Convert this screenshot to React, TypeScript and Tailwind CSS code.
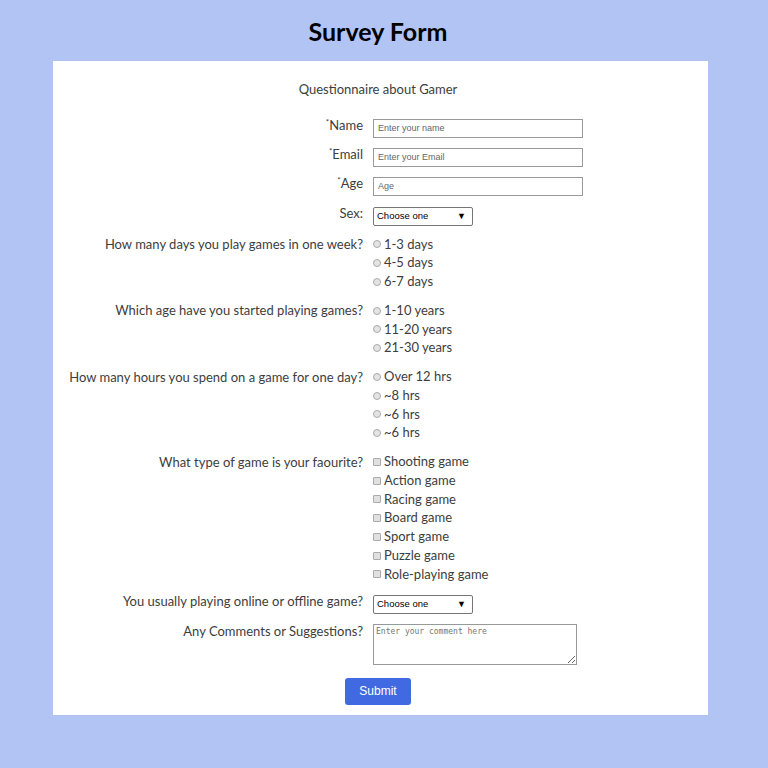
import React from "react";

const font = { fontFamily: "Lato, 'Open Sans', sans-serif" };

function Label({ children }: { children: React.ReactNode }) {
  return (
    <div className="text-right text-[13px] leading-[18px] text-[#3d3d3d]" style={font}>
      {children}
    </div>
  );
}

function Req({ t }: { t: string }) {
  return (
    <>
      <span className="text-[8px] align-top leading-[12px]">*</span>
      {t}
    </>
  );
}

function Radio({ label }: { label: string }) {
  return (
    <div className="flex items-center h-[18.75px] text-[13px] text-[#3d3d3d]" style={font}>
      <span className="w-[8px] h-[8px] rounded-full border border-[#aaa] bg-[#e4e4e4] mr-[3px] shrink-0" />
      <span>{label}</span>
    </div>
  );
}

function Check({ label }: { label: string }) {
  return (
    <div className="flex items-center h-[18.75px] text-[13px] text-[#3d3d3d]" style={font}>
      <span className="w-[8px] h-[8px] rounded-[1px] border border-[#aaa] bg-[#e0e0e0] mr-[3px] shrink-0" />
      <span>{label}</span>
    </div>
  );
}

function TextBox({ ph }: { ph: string }) {
  return (
    <div
      className="w-[210px] h-[19px] border border-[#999] bg-white flex items-center px-[4px] text-[9px] text-[#666]"
      style={{ fontFamily: "'Liberation Sans', Arial, sans-serif" }}
    >
      {ph}
    </div>
  );
}

function Select() {
  return (
    <div
      className="w-[100px] h-[19px] border border-[#767676] rounded-[2px] bg-white flex items-center justify-between pl-[3px] pr-[6px] text-[9.5px] text-black"
      style={{ fontFamily: "'Liberation Sans', Arial, sans-serif" }}
    >
      <span>Choose one</span>
      <span className="text-[9px]">▼</span>
    </div>
  );
}

const rowCls = "grid grid-cols-[310px_1fr] gap-x-[10px]";

export default function App() {
  return (
    <div className="min-h-screen bg-[#b1c4f4] pb-[53px]">
      <div className="w-[756px]">
        <h1
          className="text-center text-[25px] leading-[30px] font-bold text-black pt-[16px] pb-[15px]"
          style={font}
        >
          Survey Form
        </h1>
        <div className="ml-[53px] w-[655px] bg-white pt-[18px] pb-[10px] pr-[5px]">
          <p className="text-center text-[13px] leading-[20px] text-[#3d3d3d]" style={font}>
            Questionnaire about Gamer
          </p>

          <div className={rowCls + " mt-[17px]"}>
            <Label><Req t="Name" /></Label>
            <div className="mt-[3px]"><TextBox ph="Enter your name" /></div>
          </div>
          <div className={rowCls + " mt-[7px]"}>
            <Label><Req t="Email" /></Label>
            <div className="mt-[3px]"><TextBox ph="Enter your Email" /></div>
          </div>
          <div className={rowCls + " mt-[7px]"}>
            <Label><Req t="Age" /></Label>
            <div className="mt-[3px]"><TextBox ph="Age" /></div>
          </div>
          <div className={rowCls + " mt-[8px]"}>
            <Label>Sex:</Label>
            <div className="mt-[3px]"><Select /></div>
          </div>

          <div className={rowCls + " mt-[9px]"}>
            <Label>How many days you play games in one week?</Label>
            <div>
              <Radio label="1-3 days" />
              <Radio label="4-5 days" />
              <Radio label="6-7 days" />
            </div>
          </div>
          <div className={rowCls + " mt-[10px]"}>
            <Label>Which age have you started playing games?</Label>
            <div>
              <Radio label="1-10 years" />
              <Radio label="11-20 years" />
              <Radio label="21-30 years" />
            </div>
          </div>
          <div className={rowCls + " mt-[10px]"}>
            <Label>How many hours you spend on a game for one day?</Label>
            <div>
              <Radio label="Over 12 hrs" />
              <Radio label="~8 hrs" />
              <Radio label="~6 hrs" />
              <Radio label="~6 hrs" />
            </div>
          </div>
          <div className={rowCls + " mt-[10px]"}>
            <Label>What type of game is your faourite?</Label>
            <div>
              <Check label="Shooting game" />
              <Check label="Action game" />
              <Check label="Racing game" />
              <Check label="Board game" />
              <Check label="Sport game" />
              <Check label="Puzzle game" />
              <Check label="Role-playing game" />
            </div>
          </div>

          <div className={rowCls + " mt-[8px]"}>
            <Label>You usually playing online or offline game?</Label>
            <div className="mt-[3px]"><Select /></div>
          </div>
          <div className={rowCls + " mt-[8px]"}>
            <Label>Any Comments or Suggestions?</Label>
            <div className="mt-[2px]">
              <textarea
                readOnly
                placeholder="Enter your comment here"
                className="block w-[204px] h-[41px] border border-[#999] px-[2px] py-[2px] text-[8px] leading-[10px] placeholder:text-[#777] resize"
                style={{ fontFamily: "'DejaVu Sans Mono', monospace" }}
              />
            </div>
          </div>

          <div className="flex justify-center mt-[13px]">
            <button
              className="w-[66px] h-[27px] rounded-[3px] bg-[#4169e1] text-white text-[12px]"
              style={{ fontFamily: "'Liberation Sans', Arial, sans-serif" }}
            >
              Submit
            </button>
          </div>
        </div>
      </div>
    </div>
  );
}
